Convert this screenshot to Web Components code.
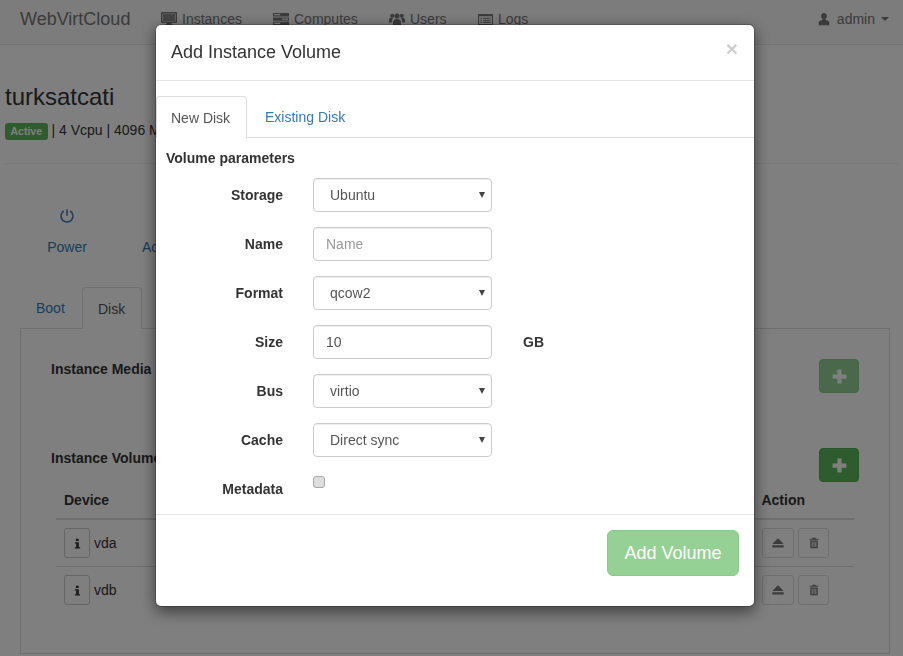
<!DOCTYPE html>
<html>
<head>
<meta charset="utf-8">
<title>WebVirtCloud</title>
<style>
  html, body { margin: 0; height: 100%; overflow: hidden; background: #fff; }
  body { font: 14px/20px "Liberation Sans", Arial, sans-serif; color: #333; }
</style>
</head>
<body>

<x-navbar></x-navbar>
<x-instance-page></x-instance-page>
<x-backdrop></x-backdrop>
<x-volume-modal></x-volume-modal>

<script>
// icon paths, all on a 16x16 box
const ICONS = {
  monitor: '<path fill-rule="evenodd" d="M1 1h14a1 1 0 0 1 1 1v9a1 1 0 0 1-1 1H1a1 1 0 0 1-1-1V2a1 1 0 0 1 1-1zm.4 1.4v8h13.2v-8z"/><path d="M2 3h12v7H2z" opacity=".85"/><path d="M5.5 12h5v1.4h1.5V15H4v-1.6h1.5z"/>',
  server: '<path fill-rule="evenodd" d="M0 2h16v3.4H0zm1.2 1v1.3h6V3zM0 6.4h16v3.4H0zm9 1v1.3h6V7.4zM0 10.8h16v3.4H0zm1.2 1v1.3h6v-1.3z"/>',
  users: '<circle cx="8" cy="5" r="2.6"/><circle cx="3.2" cy="4.8" r="2"/><circle cx="12.8" cy="4.8" r="2"/><path d="M4 14v-2.4C4 9.4 5.5 8 8 8s4 1.4 4 3.6V14z"/><path d="M0 11.5V9c0-1.5 1-2.4 2.6-2.4.7 0 1.3.2 1.7.5-.9.8-1.5 2-1.5 3.5v.9zM16 11.5V9c0-1.5-1-2.4-2.6-2.4-.7 0-1.3.2-1.7.5.9.8 1.5 2 1.5 3.5v.9z"/>',
  logs: '<path fill-rule="evenodd" d="M1 2h14a1 1 0 0 1 1 1v10a1 1 0 0 1-1 1H1a1 1 0 0 1-1-1V3a1 1 0 0 1 1-1zm.2 2.6v8.2h13.6V4.6z"/><path d="M2.500 6h1.600v1.200H2.500zM5.300 6h8.200v1.200H5.300zM2.500 8.200h1.600v1.200H2.500zM5.300 8.200h8.200v1.200H5.300zM2.500 10.400h1.600v1.200H2.500zM5.300 10.400h8.200v1.200H5.300z"/>',
  user: '<path d="M8 1c2 0 3.200 1.500 3.200 3.600 0 1.400-.6 2.700-1.500 3.300v1l3.300 1.400c.7.300 1 .8 1 1.500V15H2v-3.200c0-.7.300-1.200 1-1.500l3.300-1.400v-1C5.400 7.300 4.800 6 4.800 4.600 4.800 2.500 6 1 8 1z"/>',
  power: '<path fill="none" stroke="currentColor" stroke-width="1.500" d="M4.800 3a6 6 0 1 0 6.400 0M8 1.200v6.500"/>',
  info: '<path d="M6 2h3.400v3H6zM4.800 6.500h4.800v6h1.600V14H4.800v-1.500h1.600V8H4.800z"/>',
  eject: '<path d="M8 2.500l6.500 6.500h-13zM1.500 10.500h13V13h-13z"/>',
  trash: '<path fill-rule="evenodd" d="M6 1h4l.6 1.200H14v1.600H2V2.200h3.400zM3 4.800h10V15H3zm2 1.600v7h1.200v-7zm2.400 0v7h1.200v-7zm2.400 0v7H11v-7z"/>',
  plus: '<path d="M6 1.500h4v4.500h4.500v4H10v4.500H6V10H1.500V6H6z"/>'
};

class XIcon extends HTMLElement {
  connectedCallback() {
    const size = this.getAttribute('size') || 14;
    const root = this.shadowRoot || this.attachShadow({ mode: 'open' });
    root.innerHTML = `
      <style>
        :host { display: inline-flex; line-height: 0; }
        svg { fill: currentColor; }
      </style>
      <svg width="${size}" height="${size}" viewBox="0 0 16 16">${ICONS[this.getAttribute('name')]}</svg>`;
  }
}

class XNavbar extends HTMLElement {
  constructor() {
    super();
    this.attachShadow({ mode: 'open' }).innerHTML = `
      <style>
        :host {
          display: flex; align-items: center; box-sizing: content-box;
          height: 38px; padding: 0 14px 6px 20px;
          background: #f8f8f8; border-bottom: 1px solid #e7e7e7;
          color: #777;
        }
        .brand { font-size: 18px; width: 141px; }
        .links { display: flex; flex: 1; }
        .links span { display: flex; align-items: center; gap: 5px; }
        .links span:nth-child(1) { width: 112px; }
        .links span:nth-child(2) { width: 116px; }
        .links span:nth-child(3) { width: 89px; }
        .user { display: flex; align-items: center; gap: 6px; }
        .caret {
          width: 0; height: 0; margin-left: 0;
          border: 4px solid transparent; border-top-color: #777; border-bottom: 0;
        }
      </style>
      <div class="brand">WebVirtCloud</div>
      <div class="links">
        <span><x-icon name="monitor" size="16"></x-icon>Instances</span>
        <span><x-icon name="server" size="16"></x-icon>Computes</span>
        <span><x-icon name="users" size="16"></x-icon>Users</span>
        <span><x-icon name="logs" size="15"></x-icon>Logs</span>
      </div>
      <div class="user"><x-icon name="user" size="14"></x-icon>admin<i class="caret"></i></div>`;
  }
}

class XSmallBtn extends HTMLElement {
  constructor() {
    super();
    this.attachShadow({ mode: 'open' }).innerHTML = `
      <style>
        :host {
          display: inline-flex; align-items: center; justify-content: center;
          box-sizing: border-box; height: 30px; width: 26px;
          background: #fff; border: 1px solid #ccc; border-radius: 3px; color: #333;
        }
        :host([disabled]) { opacity: .65; }
      </style>
      <slot></slot>`;
  }
}

class XAddBtn extends HTMLElement {
  constructor() {
    super();
    this.attachShadow({ mode: 'open' }).innerHTML = `
      <style>
        :host {
          display: flex; align-items: center; justify-content: center;
          box-sizing: border-box; width: 40px; height: 34px;
          background: #5cb85c; border: 1px solid #4cae4c; border-radius: 4px; color: #fff;
        }
        :host([disabled]) { opacity: .65; }
      </style>
      <x-icon name="plus" size="17"></x-icon>`;
  }
}

class XVolumeRow extends HTMLElement {
  constructor() {
    super();
    this.attachShadow({ mode: 'open' }).innerHTML = `
      <style>
        :host {
          display: flex; align-items: center; justify-content: space-between;
          height: 46px; padding: 0 25px 0 8px; border-top: 1px solid #ddd;
        }
        .left { display: flex; align-items: center; gap: 4px; }
        .right { display: flex; gap: 4px; }
      </style>
      <div class="left">
        <x-small-btn><x-icon name="info" size="13"></x-icon></x-small-btn>
        <slot></slot>
      </div>
      <div class="right">
        <x-small-btn disabled style="width:32px"><x-icon name="eject" size="14"></x-icon></x-small-btn>
        <x-small-btn disabled style="width:31px"><x-icon name="trash" size="12"></x-icon></x-small-btn>
      </div>`;
  }
}

class XInstancePage extends HTMLElement {
  constructor() {
    super();
    this.attachShadow({ mode: 'open' }).innerHTML = `
      <style>
        :host { display: block; padding: 39px 5px 0; }
        h1 { margin: 0; font-size: 24px; font-weight: 400; line-height: 26px; }
        .status { margin-top: 10px; display: flex; align-items: center; gap: 4px; white-space: nowrap; }
        .badge {
          background: #5cb85c; color: #fff; font-size: 10.500px; font-weight: 700;
          line-height: 17px; padding: 0 5.500px; border-radius: 3px; margin-top: 2px;
        }
        hr { margin: 23px 0 0; border: 0; border-top: 1px solid #eee; }
        .actions { display: flex; color: #337ab7; margin-top: 44px; padding-left: 15px; height: 79px; }
        .action { display: flex; flex-direction: column; align-items: center; width: 94px; gap: 13px; }
        .action x-icon { height: 16px; }
        .action.second { padding-top: 29px; width: auto; margin-left: 28px; }
        .tabs { display: flex; margin-left: 15px; height: 41px; padding-left: 1px; }
        .tabs span { box-sizing: border-box; padding: 11px 15px 0; }
        .tabs .link { color: #337ab7; width: 61px; }
        .tabs .on {
          width: 60px; height: 42px; background: #fff; color: #555; position: relative; z-index: 1;
          border: 1px solid #ddd; border-bottom: 0; border-radius: 4px 4px 0 0;
        }
        .panel {
          box-sizing: border-box; height: 326px; margin: 0 8px 0 15px;
          border: 1px solid #ddd; padding: 30px 30px 0;
        }
        .head { display: flex; justify-content: space-between; font-weight: 700; }
        .media { height: 89px; }
        .table { margin: 7px 5px 0 5px; }
        .cols { display: flex; justify-content: space-between; font-weight: 700; height: 22px; padding: 0 49px 0 8px; align-items: center; margin-bottom: 7px; }
        .rule { border-top: 2px solid #ddd; }
        x-volume-row:first-of-type { border-top: 0; }
      </style>
      <h1>turksatcati</h1>
      <div class="status"><span class="badge">Active</span> | 4 Vcpu | 4096 MB</div>
      <hr>
      <div class="actions">
        <div class="action"><x-icon name="power" size="16"></x-icon>Power</div>
        <div class="action second">Access</div>
      </div>
      <div class="tabs"><span class="link">Boot</span><span class="on">Disk</span></div>
      <div class="panel">
        <div class="media head"><span>Instance Media</span><x-add-btn disabled></x-add-btn></div>
        <div class="head"><span>Instance Volumes</span><x-add-btn></x-add-btn></div>
        <div class="table">
          <div class="cols"><span>Device</span><span>Action</span></div>
          <div class="rule"></div>
          <x-volume-row>vda</x-volume-row>
          <x-volume-row>vdb</x-volume-row>
        </div>
      </div>`;
  }
}

class XBackdrop extends HTMLElement {
  constructor() {
    super();
    this.attachShadow({ mode: 'open' }).innerHTML = `
      <style>
        :host { position: fixed; inset: 0; z-index: 10; background: rgba(0, 0, 0, .5); }
      </style>`;
  }
}

// one label + control line of the volume form
class XFormRow extends HTMLElement {
  constructor() {
    super();
    this.attachShadow({ mode: 'open' }).innerHTML = `
      <style>
        :host {
          display: grid; grid-template-columns: 117px 179px auto; column-gap: 30px;
          align-items: center; min-height: 34px; font-weight: 700;
        }
        label { text-align: right; }
        .after { margin-left: 1px; }
      </style>
      <label>${this.getAttribute('label')}</label>
      <div><slot></slot></div>
      <div class="after"><slot name="after"></slot></div>`;
  }
}

class XSelect extends HTMLElement {
  constructor() {
    super();
    this.attachShadow({ mode: 'open' }).innerHTML = `
      <style>
        :host { display: block; position: relative; }
        select {
          appearance: none; display: block; width: 179px; height: 34px; box-sizing: border-box;
          padding: 0 12px 0 16px; font: 14px "Liberation Sans", Arial, sans-serif; color: #555;
          background: #fff; border: 1px solid #ccc; border-radius: 4px;
          box-shadow: inset 0 1px 1px rgba(0, 0, 0, .075);
        }
        .arrow {
          position: absolute; right: 7px; top: 14px; width: 0; height: 0;
          border: 3px solid transparent; border-top: 6px solid #444; border-bottom: 0;
        }
      </style>
      <select><option>${this.getAttribute('value')}</option></select>
      <i class="arrow"></i>`;
  }
}

class XTextInput extends HTMLElement {
  constructor() {
    super();
    const value = this.getAttribute('value');
    const placeholder = this.getAttribute('placeholder');
    this.attachShadow({ mode: 'open' }).innerHTML = `
      <style>
        :host { display: block; }
        input {
          display: block; width: 179px; height: 34px; box-sizing: border-box; padding: 0 12px;
          font: 14px "Liberation Sans", Arial, sans-serif; color: #555;
          background: #fff; border: 1px solid #ccc; border-radius: 4px;
          box-shadow: inset 0 1px 1px rgba(0, 0, 0, .075);
        }
        input::placeholder { color: #999; opacity: 1; }
      </style>
      <input ${value ? `value="${value}"` : ''} ${placeholder ? `placeholder="${placeholder}"` : ''}>`;
  }
}

class XVolumeModal extends HTMLElement {
  constructor() {
    super();
    this.attachShadow({ mode: 'open' }).innerHTML = `
      <style>
        :host {
          position: fixed; left: 155px; top: 24px; width: 600px; height: 583px; z-index: 11;
          box-sizing: border-box; display: block;
          background: #fff; border-radius: 6px; border: 1px solid rgba(0, 0, 0, .2);
          background-clip: padding-box;
          box-shadow: 0 5px 15px rgba(0, 0, 0, .5);
        }
        header {
          display: flex; justify-content: space-between; box-sizing: border-box;
          height: 56px; padding: 15px 15px 0; border-bottom: 1px solid #e5e5e5;
        }
        h4 { margin: 0; font-size: 18px; font-weight: 400; line-height: 25px; }
        .close { font-size: 21px; font-weight: 700; color: #000; opacity: .2; line-height: 18px; padding-right: 1px; }
        .tabs { display: flex; height: 41px; margin-top: 15px; border-bottom: 1px solid #ddd; white-space: nowrap; }
        .tabs span { box-sizing: border-box; padding: 11px 15px 0; }
        .tabs .on {
          width: 91px; height: 42px; color: #555; background: #fff; padding-left: 14px;
          border: 1px solid #ddd; border-bottom: 0; border-radius: 4px 4px 0 0;
        }
        .tabs .link { color: #337ab7; margin-left: 2px; padding-left: 16px; }
        .body { padding: 10px 10px 0; }
        .title { font-weight: 700; }
        .rows { display: flex; flex-direction: column; gap: 15px; margin-top: 10px; }
        .check {
          appearance: none; display: block; margin: 0; width: 12px; height: 12px; box-sizing: border-box;
          background: #dedede; border: 1px solid #a8a8a8; border-radius: 3px;
          transform: translateY(-7px);
        }
        footer { display: flex; justify-content: flex-end; margin-top: 8px; padding: 15px 15px 0; border-top: 1px solid #e5e5e5; }
        .add {
          box-sizing: border-box; width: 132px; height: 46px; border: 1px solid #4cae4c; border-radius: 6px;
          background: #5cb85c; color: #fff; opacity: .65;
          font: 18px/44px "Liberation Sans", Arial, sans-serif; text-align: center;
        }
      </style>
      <header><h4>Add Instance Volume</h4><span class="close">×</span></header>
      <div class="tabs"><span class="on">New Disk</span><span class="link">Existing Disk</span></div>
      <div class="body">
        <div class="title">Volume parameters</div>
        <div class="rows">
          <x-form-row label="Storage"><x-select value="Ubuntu"></x-select></x-form-row>
          <x-form-row label="Name"><x-text-input placeholder="Name"></x-text-input></x-form-row>
          <x-form-row label="Format"><x-select value="qcow2"></x-select></x-form-row>
          <x-form-row label="Size"><x-text-input value="10"></x-text-input><span slot="after">GB</span></x-form-row>
          <x-form-row label="Bus"><x-select value="virtio"></x-select></x-form-row>
          <x-form-row label="Cache"><x-select value="Direct sync"></x-select></x-form-row>
          <x-form-row label="Metadata"><input type="checkbox" class="check"></x-form-row>
        </div>
      </div>
      <footer><div class="add">Add Volume</div></footer>`;
  }
}

customElements.define('x-icon', XIcon);
customElements.define('x-navbar', XNavbar);
customElements.define('x-small-btn', XSmallBtn);
customElements.define('x-add-btn', XAddBtn);
customElements.define('x-volume-row', XVolumeRow);
customElements.define('x-instance-page', XInstancePage);
customElements.define('x-backdrop', XBackdrop);
customElements.define('x-form-row', XFormRow);
customElements.define('x-select', XSelect);
customElements.define('x-text-input', XTextInput);
customElements.define('x-volume-modal', XVolumeModal);
</script>
</body>
</html>
